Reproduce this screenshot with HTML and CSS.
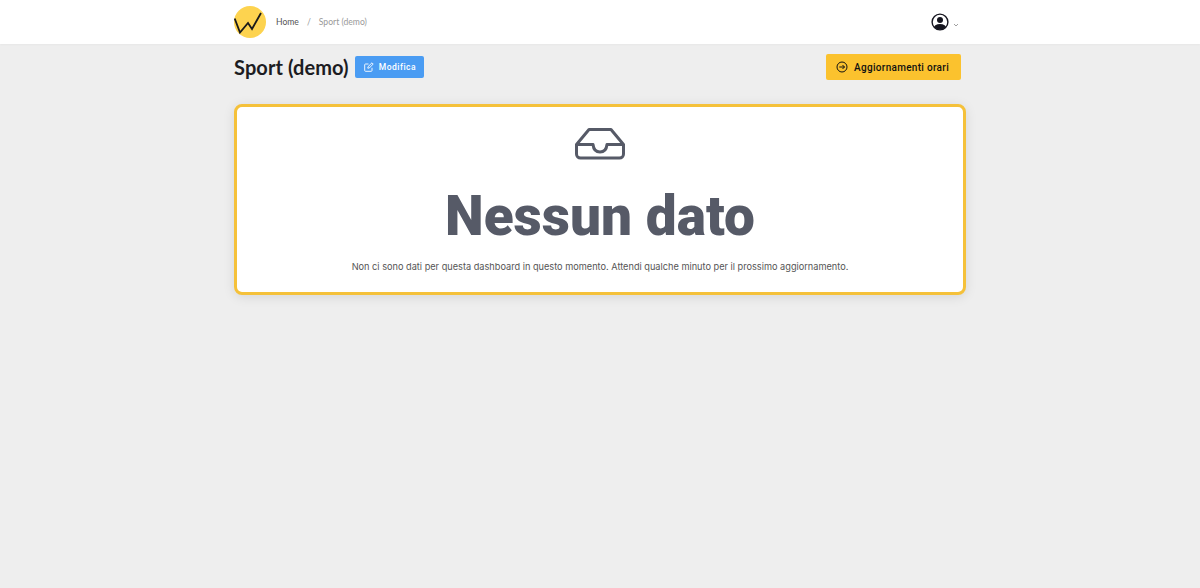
FILE: index.html
```html
<!DOCTYPE html>
<html lang="it">
<head>
<meta charset="utf-8">
<title>Sport (demo)</title>
<link rel="stylesheet" href="styles.css">
</head>
<body>
<header class="topbar">
  <div class="wrap topbar-inner">
    <nav class="crumbs">
      <svg class="logo" width="32" height="32" viewBox="0 0 32 32"><circle cx="16" cy="16" r="16" fill="#fdd34f"/><path d="M.7 12.500 6 26.500 14 17 18 23 27 7" fill="none" stroke="#1a1a1a" stroke-width="1.800"/></svg>
      <a class="crumb">Home</a>
      <span class="sep">/</span>
      <span class="crumb-current">Sport (demo)</span>
    </nav>
    <div class="user">
      <svg width="18" height="18" viewBox="0 0 18 18"><defs><clipPath id="c"><circle cx="9" cy="9" r="7.5"/></clipPath></defs><circle cx="9" cy="9" r="7.900" fill="#fff" stroke="#15151f" stroke-width="1.400"/><g clip-path="url(#c)" fill="#15151f"><circle cx="9" cy="7" r="3"/><ellipse cx="9" cy="15.500" rx="6.500" ry="4.500"/></g></svg>
      <svg class="caret" width="6" height="4" viewBox="0 0 6 4"><path d="M1 1l2 2 2-2" fill="none" stroke="#888" stroke-width=".8"/></svg>
    </div>
  </div>
</header>
<main class="wrap">
  <div class="title-row">
    <div class="title-left">
      <h1>Sport (demo)</h1>
      <button class="btn btn-blue">
        <svg width="10" height="10" viewBox="0 0 10 10"><path d="M8 5.800V8.500a.8.8 0 0 1-.8.8H1.500a.8.8 0 0 1-.8-.8V2.800A.8.8 0 0 1 1.500 2H4.500M3.800 6.200 4 4.700 8 .8 9.200 2 5.300 6z" fill="none" stroke="#fff" stroke-width=".9"/></svg>
        Modifica
      </button>
    </div>
    <button class="btn btn-yellow">
      <svg width="12" height="12" viewBox="0 0 12 12"><circle cx="6" cy="6" r="5" fill="none" stroke="#111" stroke-width="1"/><path d="M3.300 6h5.200M6.500 4 8.500 6 6.500 8" fill="none" stroke="#111" stroke-width="1"/></svg>
      Aggiornamenti orari
    </button>
  </div>
  <section class="card">
    <svg class="inbox" width="50" height="34" viewBox="0 0 50 34"><path d="M1.500 17.500 14 2.500H36L48.500 17.500V27A4 4 0 0 1 44.500 31H5.500A4 4 0 0 1 1.500 27ZM1.500 17.500H18C18.500 22 21 25 25 25S31.500 22 32 17.500H48.500" fill="none" stroke="#565a67" stroke-width="3" stroke-linejoin="round"/></svg>
    <h2>Nessun dato</h2>
    <p>Non ci sono dati per questa dashboard in questo momento. Attendi qualche minuto per il prossimo aggiornamento.</p>
  </section>
</main>
</body>
</html>
```

FILE: styles.css
```css
* { box-sizing: border-box; }
html, body { margin: 0; height: 100%; }
body { background: #eee; font-family: "Lato", "Noto Sans", sans-serif; color: #222; }
.wrap { width: 732px; margin: 0 auto; }
.topbar { height: 44px; background: #fff; box-shadow: 0 1px 2px rgba(0,0,0,.03); }
.topbar-inner { height: 44px; display: flex; align-items: center; justify-content: space-between; padding-right: 7px; }
.crumbs { display: flex; align-items: center; font-size: 8.600px; line-height: 12px; }
.logo { margin-right: 10px; }
.crumb { color: #555; margin-top: -1px; }
.sep { color: #999; margin: -1px 8px 0; }
.crumb-current { color: #999; margin-top: -1px; }
.user { display: flex; align-items: center; gap: 4px; }
.caret { margin-top: 6px; }
.title-row { display: flex; align-items: center; justify-content: space-between; padding: 10px 5px 0 0; }
.title-left { display: flex; align-items: center; gap: 6px; }
h1 { margin: -1px 0 0; font-size: 20px; font-weight: 700; line-height: 24px; letter-spacing: .1px; color: #1c1c22; }
.btn { display: inline-flex; align-items: center; border: 0; border-radius: 2px; font-family: "Roboto", sans-serif; font-weight: 500; }
.btn-blue { height: 22px; padding: 0 8px 0 9px; gap: 5px; background: #4a9cf3; color: #fff; font-size: 8.500px; letter-spacing: .5px; }
.btn-yellow { height: 26px; padding: 0 12px 0 10px; gap: 6px; background: #fbc22e; color: #111; font-size: 10px; letter-spacing: .3px; }
.card { margin: 24px 0 0; width: 732px; height: 191px; background: #fff; border: 3px solid #f5c13a; border-radius: 8px; box-shadow: 0 2px 12px rgba(0,0,0,.1); display: flex; flex-direction: column; align-items: center; padding-top: 20px; }
h2 { margin: 23px 0 0; font-family: "Roboto", sans-serif; font-weight: 900; font-size: 55px; line-height: 64px; color: #565a67; }
p { margin: 12px 0 0; font-family: "Inter", sans-serif; font-size: 9.200px; color: #555; line-height: 14px; }
```
